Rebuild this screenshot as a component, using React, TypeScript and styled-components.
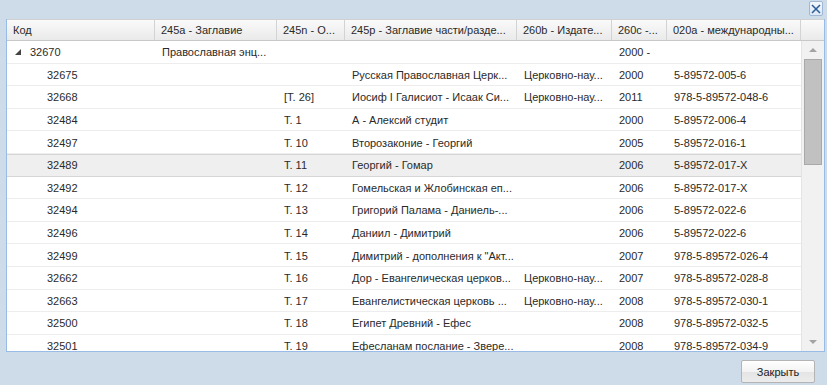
import styled, { createGlobalStyle } from 'styled-components'

const COLS = '148px 122px 68px 172px 95px 55px 134px'

type Row = {
  id: string
  title?: string
  vol?: string
  part?: string
  pub?: string
  year?: string
  isbn?: string
  parent?: boolean
  selected?: boolean
}

const rows: Row[] = [
  { id: '32670', title: 'Православная энц...', year: '2000 -', parent: true },
  { id: '32675', part: 'Русская Православная Церк...', pub: 'Церковно-нау...', year: '2000', isbn: '5-89572-005-6' },
  { id: '32668', vol: '[Т. 26]', part: 'Иосиф I Галисиот - Исаак Си...', pub: 'Церковно-нау...', year: '2011', isbn: '978-5-89572-048-6' },
  { id: '32484', vol: 'Т. 1', part: 'А - Алексий студит', year: '2000', isbn: '5-89572-006-4' },
  { id: '32497', vol: 'Т. 10', part: 'Второзаконие - Георгий', year: '2005', isbn: '5-89572-016-1' },
  { id: '32489', vol: 'Т. 11', part: 'Георгий - Гомар', year: '2006', isbn: '5-89572-017-X', selected: true },
  { id: '32492', vol: 'Т. 12', part: 'Гомельская и Жлобинская еп...', year: '2006', isbn: '5-89572-017-X' },
  { id: '32494', vol: 'Т. 13', part: 'Григорий Палама - Даниель-...', year: '2006', isbn: '5-89572-022-6' },
  { id: '32496', vol: 'Т. 14', part: 'Даниил - Димитрий', year: '2006', isbn: '5-89572-022-6' },
  { id: '32499', vol: 'Т. 15', part: 'Димитрий - дополнения к "Акт...', year: '2007', isbn: '978-5-89572-026-4' },
  { id: '32662', vol: 'Т. 16', part: 'Дор - Евангелическая церков...', pub: 'Церковно-нау...', year: '2007', isbn: '978-5-89572-028-8' },
  { id: '32663', vol: 'Т. 17', part: 'Евангелистическая церковь ...', pub: 'Церковно-нау...', year: '2008', isbn: '978-5-89572-030-1' },
  { id: '32500', vol: 'Т. 18', part: 'Египет Древний - Ефес', year: '2008', isbn: '978-5-89572-032-5' },
  { id: '32501', vol: 'Т. 19', part: 'Ефесланам послание - Звере...', year: '2008', isbn: '978-5-89572-034-9' },
]

const headers = [
  'Код',
  '245a - Заглавие',
  '245n - О...',
  '245p - Заглавие части/разде...',
  '260b - Издате...',
  '260c -...',
  '020a - международны...',
]

export default function App() {
  return (
    <>
      <GlobalStyle />
      <StyledWindow>
        <StyledTopBar>
          <StyledCloseIcon title="Закрыть">
            <svg width="10" height="10" viewBox="0 0 10 10">
              <path d="M1 1 L9 9 M9 1 L1 9" stroke="#2f5f9a" strokeWidth="1.6" />
            </svg>
          </StyledCloseIcon>
        </StyledTopBar>

        <StyledGrid>
          <StyledHeaderRow>
            {headers.map((h) => (
              <StyledHeaderCell key={h}>{h}</StyledHeaderCell>
            ))}
            <StyledHeaderFiller />
          </StyledHeaderRow>

          <StyledBody>
            <StyledRows>
              {rows.map((r) => (
                <StyledRow key={r.id} $selected={r.selected}>
                  <StyledCell $indent={r.parent ? 8 : 40}>
                    {r.parent && <StyledTriangle />}
                    {r.id}
                  </StyledCell>
                  <StyledCell>{r.title}</StyledCell>
                  <StyledCell>{r.vol}</StyledCell>
                  <StyledCell>{r.part}</StyledCell>
                  <StyledCell>{r.pub}</StyledCell>
                  <StyledCell>{r.year}</StyledCell>
                  <StyledCell>{r.isbn}</StyledCell>
                </StyledRow>
              ))}
            </StyledRows>

            <StyledScrollbar>
              <StyledArrow $dir="up" />
              <StyledTrack>
                <StyledThumb />
              </StyledTrack>
              <StyledArrow $dir="down" />
            </StyledScrollbar>
          </StyledBody>
        </StyledGrid>

        <StyledFooter>
          <StyledButton>Закрыть</StyledButton>
        </StyledFooter>
      </StyledWindow>
    </>
  )
}

const GlobalStyle = createGlobalStyle`
  html, body {
    margin: 0;
    padding: 0;
    background: #cedbe8;
  }
  * {
    box-sizing: border-box;
  }
`

const StyledWindow = styled.div`
  display: flex;
  flex-direction: column;
  width: 827px;
  height: 385px;
  overflow: hidden;
  background: #cedbe8;
  font-family: 'Liberation Sans', Arial, sans-serif;
  font-size: 11px;
  color: #2a2a2a;
`

const StyledTopBar = styled.div`
  display: flex;
  justify-content: flex-end;
  align-items: flex-start;
  height: 19px;
  padding: 1px 4px 0 0;
`

const StyledCloseIcon = styled.div`
  display: flex;
  align-items: center;
  justify-content: center;
  width: 14px;
  height: 15px;
  border: 1px solid #9fb8d6;
  border-radius: 2px;
  background: linear-gradient(#f4f8fc, #dde8f4);
`

const StyledGrid = styled.div`
  display: flex;
  flex-direction: column;
  height: 333px;
  margin: 0 2px 0 6px;
  border: 1px solid #99bbe8;
  border-top: none;
  background: #fff;
`

const StyledHeaderRow = styled.div`
  display: grid;
  grid-template-columns: ${COLS} 1fr;
  height: 22px;
  background: linear-gradient(#fafafa, #eaeaea);
  border-top: 1px solid #d0d0d0;
  border-bottom: 1px solid #c8c8c8;
`

const StyledHeaderCell = styled.div`
  display: flex;
  align-items: center;
  padding: 0 6px;
  border-right: 1px solid #d3d3d3;
  white-space: nowrap;
  overflow: hidden;
`

const StyledHeaderFiller = styled.div``

const StyledBody = styled.div`
  display: flex;
  flex: 1;
  min-height: 0;
`

const StyledRows = styled.div`
  flex: 1;
  overflow: hidden;
`

const StyledRow = styled.div<{ $selected?: boolean }>`
  display: grid;
  grid-template-columns: ${COLS};
  height: 22.6px;
  background: ${({ $selected }) => ($selected ? '#efefef' : '#fff')};
  border-top: 1px solid ${({ $selected }) => ($selected ? '#d6d6d6' : 'transparent')};
  border-bottom: 1px solid ${({ $selected }) => ($selected ? '#d6d6d6' : '#ededed')};
`

const StyledCell = styled.div<{ $indent?: number }>`
  display: flex;
  align-items: center;
  padding: 0 6px 0 ${({ $indent }) => $indent ?? 7}px;
  white-space: nowrap;
  overflow: hidden;
`

const StyledTriangle = styled.span`
  width: 0;
  height: 0;
  margin-right: 9px;
  border-left: 6px solid transparent;
  border-bottom: 6px solid #444;
`

const StyledScrollbar = styled.div`
  display: flex;
  flex-direction: column;
  width: 23px;
  background: #f1f1f1;
  border-left: 1px solid #e4e4e4;
`

const StyledArrow = styled.div<{ $dir: 'up' | 'down' }>`
  display: flex;
  justify-content: center;
  align-items: center;
  height: 18px;

  &::before {
    content: '';
    width: 0;
    height: 0;
    border-left: 4px solid transparent;
    border-right: 4px solid transparent;
    ${({ $dir }) =>
      $dir === 'up' ? 'border-bottom: 4px solid #a3a3a3;' : 'border-top: 4px solid #a3a3a3;'}
  }
`

const StyledTrack = styled.div`
  flex: 1;
  padding: 0 2px;
`

const StyledThumb = styled.div`
  height: 106px;
  background: #c1c1c1;
  border: 1px solid #a9a9a9;
`

const StyledFooter = styled.div`
  display: flex;
  justify-content: flex-end;
  padding: 8px 12px 0 0;
`

const StyledButton = styled.button`
  width: 74px;
  height: 23px;
  border: 1px solid #b4b4b4;
  border-radius: 2px;
  background: linear-gradient(#ffffff 0%, #f3f3f3 50%, #e4e4e4 51%, #ececec 100%);
  font-family: 'Liberation Sans', Arial, sans-serif;
  font-size: 11px;
  color: #222;
  cursor: pointer;
`
